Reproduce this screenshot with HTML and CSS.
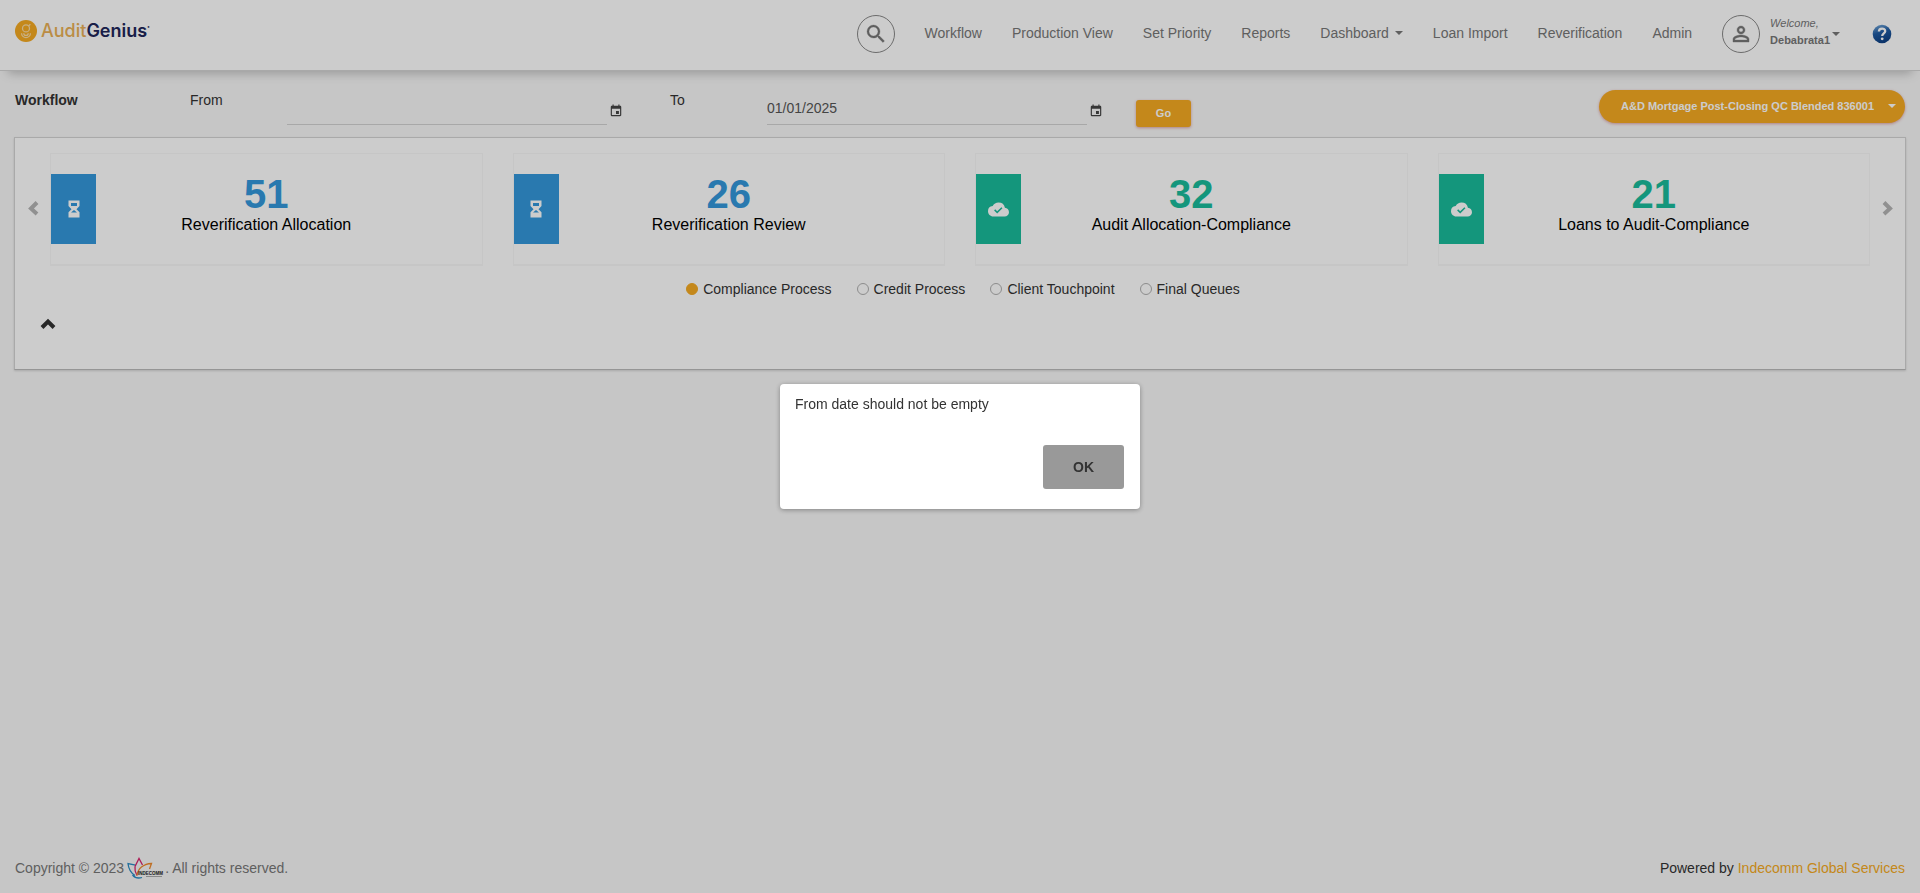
FILE: index.html
```html
<!DOCTYPE html>
<html lang="en">
<head>
<meta charset="utf-8">
<title>AuditGenius</title>
<link rel="stylesheet" href="styles.css">
</head>
<body>
<div class="page">
  <header class="header">
    <a class="brand" href="#">
      <svg class="brand-mark" viewBox="0 0 22 22" aria-hidden="true"><circle cx="11" cy="11" r="11" fill="#f5aa22"/><g fill="none" stroke="#fbdca5" stroke-width="1.3"><circle cx="11" cy="8.4" r="3.500"/><path d="M13.500 6 15.400 4.300M6.600 13.200a4.400 4.400 0 0 0 8.800 0M8.800 13.200a2.200 2.200 0 0 0 4.400 0"/></g></svg>
      <span class="brand-name"><span class="brand-audit">Audit</span><span class="brand-genius">Genius</span></span><span class="brand-tm">●</span>
    </a>
    <nav class="nav">
      <button class="round" type="button" aria-label="Search"><svg width="24" height="24" viewBox="0 0 24 24"><path fill="currentColor" stroke="currentColor" stroke-width=".3" d="M15.5 14h-.79l-.28-.27A6.47 6.47 0 0 0 16 9.5 6.5 6.5 0 1 0 9.500 16c1.610 0 3.090-.59 4.230-1.570l.27.28v.79l5 4.990L20.490 19l-4.990-5zm-6 0C7.010 14 5 11.990 5 9.500S7.010 5 9.500 5 14 7.010 14 9.500 11.990 14 9.500 14z"/></svg></button>
      <a class="nav-link" href="#">Workflow</a>
      <a class="nav-link" href="#">Production View</a>
      <a class="nav-link" href="#">Set Priority</a>
      <a class="nav-link" href="#">Reports</a>
      <a class="nav-link" href="#">Dashboard<span class="caret"></span></a>
      <a class="nav-link" href="#">Loan Import</a>
      <a class="nav-link" href="#">Reverification</a>
      <a class="nav-link" href="#">Admin</a>
      <button class="user" type="button">
        <span class="round"><svg width="24" height="24" viewBox="0 0 24 24"><path fill="currentColor" stroke="currentColor" stroke-width=".4" d="M12 5.900a2.100 2.100 0 1 1 0 4.200 2.100 2.100 0 0 1 0-4.200m0 9c2.970 0 6.100 1.460 6.100 2.100v1.100H5.900V17c0-.64 3.130-2.100 6.100-2.100M12 4C9.790 4 8 5.790 8 8s1.790 4 4 4 4-1.790 4-4-1.790-4-4-4zm0 9c-2.670 0-8 1.340-8 4v3h16v-3c0-2.660-5.330-4-8-4z"/></svg></span>
        <span class="user-text"><em>Welcome,</em><strong>Debabrata1</strong></span>
        <span class="caret"></span>
      </button>
      <a class="help" href="#" aria-label="Help"><svg width="20" height="20" viewBox="0 0 20 20"><defs><linearGradient id="ball" x1="0" y1="0" x2="0.3" y2="1"><stop offset="0" stop-color="#7fb0de"/><stop offset=".5" stop-color="#1f5ba3"/><stop offset="1" stop-color="#0f4285"/></linearGradient></defs><circle cx="10" cy="10" r="9.300" fill="url(#ball)"/><path d="M6.900 7.600c0-4 6.300-4 6.300-.4 0 2.200-3 2.200-3 4.800" fill="none" stroke="#fff" stroke-width="2.300"/><circle cx="10.200" cy="14.800" r="1.400" fill="#fff"/></svg></a>
    </nav>
  </header>

  <main class="main">
    <form class="filters">
      <h1 class="title">Workflow</h1>
      <label class="label" for="from">From</label>
      <input class="date" id="from" type="text">
      <button class="pick" type="button" aria-label="Pick from date"><svg width="14" height="14" viewBox="0 0 24 24"><path fill="currentColor" d="M17 12h-5v5h5v-5zM16 1v2H8V1H6v2H5c-1.110 0-1.990.9-1.990 2L3 19a2 2 0 0 0 2 2h14c1.100 0 2-.9 2-2V5c0-1.100-.9-2-2-2h-1V1h-2zm3 18H5V8h14v11z"/></svg></button>
      <label class="label" for="to">To</label>
      <input class="date" id="to" type="text" value="01/01/2025">
      <button class="pick" type="button" aria-label="Pick to date"><svg width="14" height="14" viewBox="0 0 24 24"><path fill="currentColor" d="M17 12h-5v5h5v-5zM16 1v2H8V1H6v2H5c-1.110 0-1.990.9-1.990 2L3 19a2 2 0 0 0 2 2h14c1.100 0 2-.9 2-2V5c0-1.100-.9-2-2-2h-1V1h-2zm3 18H5V8h14v11z"/></svg></button>
      <div class="actions">
        <button class="go" type="button">Go</button>
        <button class="client" type="button">A&amp;D Mortgage Post-Closing QC Blended 836001<span class="caret"></span></button>
      </div>
    </form>

    <section class="panel">
      <div class="carousel">
        <button class="arrow" type="button" aria-label="Previous"><svg width="12" height="16" viewBox="0 0 12 16"><path d="M10 2.500 4 8.500l6 5.500" fill="none" stroke="currentColor" stroke-width="4"/></svg></button>
        <div class="tiles">
          <a class="tile blue" href="#"><span class="tile-icon"><svg width="20" height="20" viewBox="0 0 20 20"><path fill="currentColor" fill-rule="evenodd" d="M4.500 1.500h11v5.500L12.500 10.200l3 3V18.500h-11v-5.300l3-3-3-3.200zM7 4v3h6V4zM10 11l-3 2.500h6z"/></svg></span><span class="tile-body"><strong class="count">51</strong><span class="name">Reverification Allocation</span></span></a>
          <a class="tile blue" href="#"><span class="tile-icon"><svg width="20" height="20" viewBox="0 0 20 20"><path fill="currentColor" fill-rule="evenodd" d="M4.500 1.500h11v5.500L12.500 10.200l3 3V18.500h-11v-5.300l3-3-3-3.200zM7 4v3h6V4zM10 11l-3 2.500h6z"/></svg></span><span class="tile-body"><strong class="count">26</strong><span class="name">Reverification Review</span></span></a>
          <a class="tile green" href="#"><span class="tile-icon"><svg width="21" height="21" viewBox="0 0 24 24"><path fill="currentColor" fill-rule="evenodd" d="M19.350 10.040A7.490 7.490 0 0 0 12 4C9.110 4 6.600 5.640 5.350 8.040A5.994 5.994 0 0 0 0 14c0 3.310 2.690 6 6 6h13c2.760 0 5-2.240 5-5 0-2.640-2.050-4.780-4.650-4.960zM10.500 16.500 7 13l1.200-1.200 2.300 2.300 4.800-4.800 1.200 1.200z"/></svg></span><span class="tile-body"><strong class="count">32</strong><span class="name">Audit Allocation-Compliance</span></span></a>
          <a class="tile green" href="#"><span class="tile-icon"><svg width="21" height="21" viewBox="0 0 24 24"><path fill="currentColor" fill-rule="evenodd" d="M19.350 10.040A7.490 7.490 0 0 0 12 4C9.110 4 6.600 5.640 5.350 8.040A5.994 5.994 0 0 0 0 14c0 3.310 2.690 6 6 6h13c2.760 0 5-2.240 5-5 0-2.640-2.050-4.780-4.650-4.960zM10.500 16.500 7 13l1.200-1.200 2.300 2.300 4.800-4.800 1.200 1.200z"/></svg></span><span class="tile-body"><strong class="count">21</strong><span class="name">Loans to Audit-Compliance</span></span></a>
        </div>
        <button class="arrow" type="button" aria-label="Next"><svg width="12" height="16" viewBox="0 0 12 16"><path d="M2 2.500 8 8.500 2 14" fill="none" stroke="currentColor" stroke-width="4"/></svg></button>
      </div>
      <div class="radios">
        <label class="radio"><input type="radio" name="process" checked>Compliance Process</label>
        <label class="radio"><input type="radio" name="process">Credit Process</label>
        <label class="radio"><input type="radio" name="process">Client Touchpoint</label>
        <label class="radio"><input type="radio" name="process">Final Queues</label>
      </div>
      <button class="collapse" type="button" aria-label="Collapse"><svg width="16" height="12" viewBox="0 0 16 12"><path d="M2 9.500 8 3.500l6 6" fill="none" stroke="currentColor" stroke-width="4"/></svg></button>
    </section>
  </main>

  <footer class="footer">
    <p class="copy">Copyright © 2023
      <svg class="indecomm" width="38" height="22" viewBox="0 0 38 22" aria-hidden="true"><g fill="none" stroke-width="1.300"><path d="M8.500 8.200 1 6.500C1.500 12 4 16 8 18.500" stroke="#2a8cc4"/><path d="M8 9.500 12 1.500l3.500 6.500M8 9.500c-.5 3.500.5 6.500 2 9" stroke="#d8246c"/><path d="M22.500 12 24.500 6.500C17 7 11 11 10 18.500" stroke="#ee8a2c"/><path d="M5.500 18c2.500 3 6 3.500 9.500 2.500" stroke="#2a8cc4"/></g><text x="11" y="17.500" font-family="Liberation Sans, sans-serif" font-size="4.500" font-weight="bold" fill="#222">INDECOMM</text><path d="M19 19.500h16" stroke="#aaa" stroke-width="1"/></svg>. All rights reserved.</p>
    <p class="powered">Powered by <a href="#">Indecomm Global Services</a></p>
  </footer>
</div>

<div class="overlay">
  <div class="dialog" role="alertdialog" aria-modal="true" aria-labelledby="message">
    <p class="message" id="message">From date should not be empty</p>
    <button class="ok" type="button">OK</button>
  </div>
</div>
</body>
</html>
```

FILE: styles.css
```css
* { box-sizing: border-box; }
body {
  margin: 0;
  background: #f8f8f8;
  color: #333;
  font: 14px/20px "Liberation Sans", Arial, sans-serif;
}
button, input { font: inherit; color: inherit; }
button { border: 0; padding: 0; background: none; cursor: pointer; }
a { color: inherit; text-decoration: none; }
p, h1 { margin: 0; }
svg { display: block; }

.page { display: flex; flex-direction: column; min-height: 100vh; }

.header {
  display: flex;
  justify-content: space-between;
  height: 71px;
  padding: 0 28px 0 15px;
  background: #fff;
  border-bottom: 1px solid #d4d4d4;
  box-shadow: 0 10px 10px -8px rgba(0, 0, 0, .25);
  color: #777;
}
.brand { display: flex; align-items: center; align-self: flex-start; margin-top: 20px; }
.brand-mark { width: 22px; height: 22px; margin-right: 4px; }
.brand-name { font: 18px/22px Inter, sans-serif; }
.brand-audit { color: #eab055; font-weight: 500; }
.brand-genius { color: #202659; font-weight: 600; }
.brand-tm { align-self: flex-start; margin-top: 4px; font-size: 4px; line-height: 6px; color: #202659; }

.nav { display: flex; align-items: center; height: 68px; }
.round {
  display: flex;
  align-items: center;
  justify-content: center;
  width: 38px;
  height: 38px;
  border: 1px solid #888;
  border-radius: 50%;
  color: #777;
}
.nav > .round { margin-right: 15px; }
.nav-link { display: flex; align-items: center; padding: 0 15px 2px; }
.caret {
  display: inline-block;
  flex: none;
  margin-left: 6px;
  border: 4px solid transparent;
  border-top-color: currentColor;
  border-bottom: 0;
}
.user { display: flex; align-items: center; margin-left: 15px; }
.user-text {
  display: flex;
  flex-direction: column;
  margin-left: 10px;
  margin-bottom: 4px;
  font-size: 11px;
  line-height: 17px;
  text-align: left;
}
.user .caret { margin-left: 2px; }
.help { margin-left: 32px; }

.main { flex: 1; padding: 0 15px; }
.filters {
  display: grid;
  grid-template-columns: 175fr 97fr 320fr 63fr 97fr 320fr 49fr 769fr;
  height: 66px;
  padding-top: 19px;
}
.title { font-size: 14px; line-height: 20px; }
.date {
  width: 100%;
  height: 35px;
  padding: 2px 0 0;
  border: 0;
  border-bottom: 1px solid #d2d2d2;
  border-radius: 0;
  background: none;
  color: #555;
}
.pick { align-self: start; margin: 14px 0 0 2px; width: 14px; color: #444; }
.actions { display: flex; justify-content: space-between; align-items: flex-start; }
.go, .client {
  background: #f5aa22;
  color: #fff;
  font-weight: bold;
  font-size: 11px;
  box-shadow: 0 1px 3px rgba(190, 60, 60, .45);
}
.go { width: 55px; height: 27px; margin-top: 10px; padding-bottom: 1px; border-radius: 3px; }
.client {
  display: flex;
  align-items: center;
  justify-content: space-between;
  min-width: 306px;
  height: 33px;
  padding: 0 9px 2px 22px;
  border-radius: 17px;
}

.panel {
  height: 233px;
  margin: 0 -1px;
  padding-top: 15px;
  background: #fff;
  border: 1px solid #d4d4d4;
  border-bottom-color: #bbb;
  box-shadow: 0 1px 2px rgba(0, 0, 0, .15);
}
.carousel { display: flex; align-items: center; }
.arrow { display: flex; justify-content: center; width: 35px; padding-bottom: 4px; color: #b5b5b5; }
.tiles { flex: 1; display: grid; grid-template-columns: repeat(4, 1fr); gap: 30px; }
.tile {
  display: grid;
  grid-template-columns: 45px 1fr 45px;
  align-items: center;
  height: 113px;
  border: 1px solid #f8f8f8;
  border-bottom-width: 2px;
}
.tile-icon { display: flex; align-items: center; justify-content: center; height: 70px; color: #fff; }
.tile-body { display: flex; flex-direction: column; text-align: center; margin-bottom: 8px; }
.count { font-size: 40px; line-height: 40px; }
.name { font-size: 16px; line-height: 22px; color: #000; }
.blue { color: #3498db; }
.blue .tile-icon { background: #3498db; }
.green { color: #1abc9c; }
.green .tile-icon { background: #1abc9c; }

.radios { display: flex; justify-content: center; gap: 25px; margin: 13px 0 0 6px; }
.radio { display: flex; align-items: center; }
.radio input {
  appearance: none;
  width: 12px;
  height: 12px;
  margin: 0 5px 0 0;
  border: 1px solid #b0b0b0;
  border-radius: 50%;
}
.radio input:checked { border-color: #f5aa22; background: #f5aa22; }
.collapse { display: block; margin: 19px 0 0 25px; }

.footer { display: flex; justify-content: space-between; align-items: center; height: 50px; padding: 0 15px; }
.copy { display: flex; align-items: center; color: #777; }
.indecomm { margin-left: 3px; }
.powered a { color: #f5aa22; }

.overlay {
  position: fixed;
  inset: 0;
  display: flex;
  align-items: center;
  justify-content: center;
  background: rgba(0, 0, 0, .2);
}
.dialog {
  display: flex;
  flex-direction: column;
  width: 360px;
  padding: 10px 16px 20px 15px;
  border-radius: 4px;
  background: #fff;
  box-shadow: 0 1px 5px rgba(0, 0, 0, .35);
}
.message { margin-bottom: 31px; }
.ok {
  align-self: flex-end;
  width: 81px;
  height: 44px;
  border-radius: 3px;
  background: #999;
  font-weight: bold;
}
```
